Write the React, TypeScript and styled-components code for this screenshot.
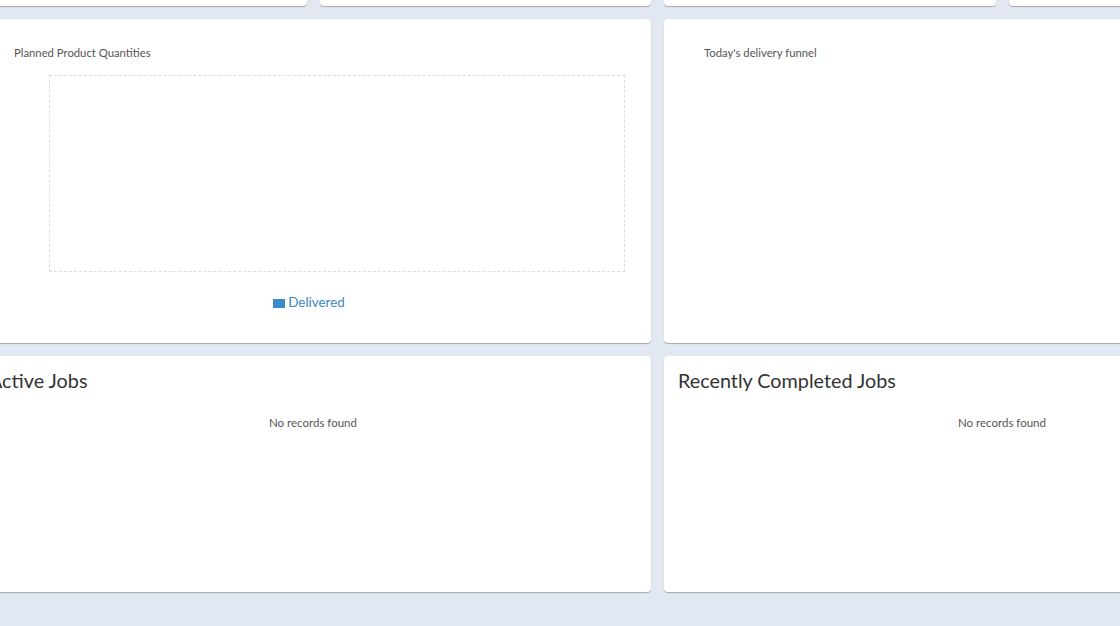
import styled, { createGlobalStyle } from "styled-components";

const GlobalStyle = createGlobalStyle`
  html, body {
    margin: 0;
    padding: 0;
    background: #e1e8f1;
    overflow: hidden;
    font-family: Lato, "Open Sans", sans-serif;
  }
`;

const Viewport = styled.div`
  width: 1120px;
  height: 626px;
  overflow: hidden;
  background: #e1e8f1;
`;

const Grid = styled.div`
  display: grid;
  grid-template-columns: repeat(4, 331.5px);
  grid-template-rows: 100px 324px 236px;
  gap: 13px;
  margin: -94px 0 0 -25px;
  width: 1365px;
`;

const Card = styled.div<{ $span?: number }>`
  grid-column: span ${(p) => p.$span ?? 1};
  background: #fff;
  border-radius: 4px;
  box-shadow: 0 1px 1px rgba(0, 0, 0, 0.28);
  box-sizing: border-box;
  display: flex;
  flex-direction: column;
`;

const ChartCard = styled(Card)<{ $pad: number }>`
  padding: 27px 26px 0 ${(p) => p.$pad}px;
`;

const ChartTitle = styled.div`
  font-size: 11.3px;
  color: #555;
  line-height: 14px;
`;

const PlotArea = styled.div`
  margin: 15px 0 0 35px;
  height: 195px;
  border: 1px dashed #ddd;
`;

const Legend = styled.div`
  display: flex;
  align-items: center;
  justify-content: center;
  gap: 3px;
  margin: 22px 0 0 0;
  padding-right: 21px;
  font-size: 13.4px;
  color: #3a87bf;
`;

const Swatch = styled.span`
  width: 12px;
  height: 9px;
  background: #3a8cc8;
  margin-top: 2px;
`;

const JobsCard = styled(Card)`
  padding: 13px 14px 0;
`;

const JobsTitle = styled.h2`
  margin: 0;
  font-size: 19.8px;
  font-weight: 400;
  color: #333;
  line-height: 22px;
`;

const Empty = styled.div`
  margin-top: 25px;
  text-align: center;
  font-size: 11.5px;
  color: #555;
`;

export default function App() {
  return (
    <Viewport>
      <GlobalStyle />
      <Grid>
        <Card />
        <Card />
        <Card />
        <Card />
        <ChartCard $span={2} $pad={39}>
          <ChartTitle>Planned Product Quantities</ChartTitle>
          <PlotArea />
          <Legend>
            <Swatch />
            Delivered
          </Legend>
        </ChartCard>
        <ChartCard $span={2} $pad={40}>
          <ChartTitle>Today's delivery funnel</ChartTitle>
        </ChartCard>
        <JobsCard $span={2}>
          <JobsTitle>Active Jobs</JobsTitle>
          <Empty>No records found</Empty>
        </JobsCard>
        <JobsCard $span={2}>
          <JobsTitle>Recently Completed Jobs</JobsTitle>
          <Empty>No records found</Empty>
        </JobsCard>
      </Grid>
    </Viewport>
  );
}
